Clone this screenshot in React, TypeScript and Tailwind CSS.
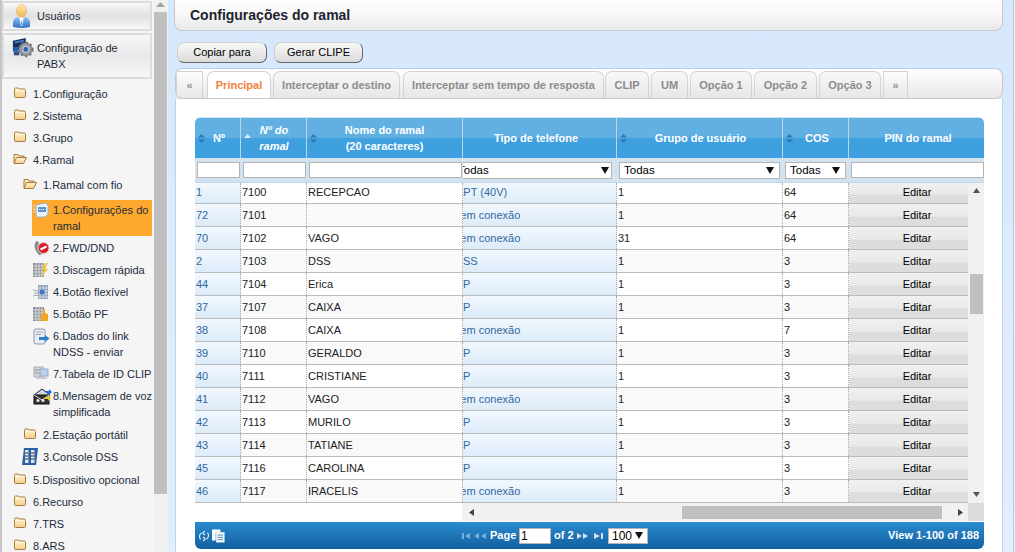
import React from "react";

const F = "font-['Liberation_Sans',Arial,sans-serif]";

function Folder({ open = false }: { open?: boolean }) {
  return (
    <svg width="14" height="13" viewBox="0 0 14 13" className="shrink-0">
      <defs>
        <linearGradient id="fg" x1="0" y1="0" x2="0" y2="1">
          <stop offset="0" stopColor="#fff3cf" />
          <stop offset="1" stopColor="#f5cf8b" />
        </linearGradient>
      </defs>
      {open ? (
        <>
          <path d="M1 11V2.5h4l1 1.5h5v2" fill="#fbe6b8" stroke="#a87a3e" />
          <path d="M1 11.5l2.5-6h10l-3 6z" fill="url(#fg)" stroke="#a87a3e" />
        </>
      ) : (
        <>
          <path d="M1.500 3.500V3q0-1 1-1h3l1 1h4.500q1.500 0 1.500 1.500v6q0 1-1 1h-9q-1 0-1-1z" fill="url(#fg)" stroke="#a87a3e" />
          <path d="M2 4.500h10" stroke="#fff8e6" />
        </>
      )}
    </svg>
  );
}

function Ico({ k }: { k: string }) {
  const c = "shrink-0";
  if (k === "cfg")
    return (
      <svg width="16" height="16" viewBox="0 0 16 16" className={c}>
        <path d="M0 4h3M0 7h3M0 10h3" stroke="#dfe3e8" />
        <path d="M3 3l9-2 3 2v9l-3 3H4l-1-2z" fill="#eef3fa" stroke="#9fb0c2" />
        <rect x="5" y="5" width="8" height="5" fill="#5b95d8" />
        <path d="M6 7.500h6" stroke="#fff" strokeDasharray="1 1" />
      </svg>
    );
  if (k === "fwd")
    return (
      <svg width="17" height="16" viewBox="0 0 17 16" className={c}>
        <path d="M3 1Q-1 8 6 15l4-1Q4 9 6 2z" fill="#8b8f96" />
        <circle cx="10.500" cy="8" r="5.500" fill="#d81e2c" stroke="#f3c9c9" />
        <path d="M7.500 9.500l6-3" stroke="#fff" strokeWidth="2" />
      </svg>
    );
  if (k === "dial" || k === "pf" || k === "flex")
    return (
      <svg width="16" height="16" viewBox="0 0 16 16" className={c}>
        {k !== "flex" && <rect x="0" y="1" width="11" height="14" fill="#8d9096" />}
        {k !== "flex" &&
          [3, 6, 9].map((x) => <path key={x} d={`M${x} 1v14`} stroke="#d5d7da" />)}
        {k !== "flex" &&
          [4, 7, 10, 13].map((y) => <path key={y} d={`M0 ${y}h11`} stroke="#d5d7da" />)}
        {k === "dial" && <path d="M13 1l-5 7h3l-3 7 7-8h-3l3-6z" fill="#f4c430" />}
        {k === "pf" && <path d="M8 15V9l2-1V3h2v4l3 1v7z" fill="#f5a623" />}
        {k === "flex" && (
          <>
            <rect x="5" y="1" width="10" height="14" fill="#8497b0" />
            {[7, 10, 13].map((x) => <path key={x} d={`M${x} 1v14`} stroke="#d5dbe3" />)}
            {[4, 7, 10, 13].map((y) => <path key={y} d={`M5 ${y}h10`} stroke="#d5dbe3" />)}
            <path d="M0 6l5 1M1 9h5M0 12l5-1" stroke="#9aa3ad" />
            <circle cx="9" cy="8" r="2.500" fill="#3f78c4" />
          </>
        )}
      </svg>
    );
  if (k === "link")
    return (
      <svg width="17" height="17" viewBox="0 0 17 17" className={c}>
        <rect x="1" y="1" width="11" height="15" rx="2" fill="#e9edf2" stroke="#8a97a6" />
        <path d="M3 4h7M3 6.500h5" stroke="#9aa6b3" />
        <path d="M6 9h6V7l4.500 3.500L12 14v-2H6z" fill="#2f7fd0" />
      </svg>
    );
  if (k === "clip")
    return (
      <svg width="16" height="14" viewBox="0 0 16 14" className={c}>
        <rect x="1" y="1" width="9" height="10" fill="#d4d6d9" stroke="#a9adb2" />
        <rect x="7" y="3" width="8" height="7" fill="#b9d2ea" stroke="#8fa9c4" />
        <rect x="3" y="11" width="11" height="2" fill="#c7cacf" />
        <path d="M2 4h4M2 7h4" stroke="#8e9398" />
      </svg>
    );
  if (k === "msg")
    return (
      <svg width="19" height="17" viewBox="0 0 19 17" className={c}>
        <path d="M1 7l8-6 8 6" fill="#cfd7df" stroke="#222" />
        <rect x="1" y="7" width="15" height="9" fill="#333" stroke="#111" />
        <path d="M1 7l8 5 7-5" fill="none" stroke="#ddd" />
        <circle cx="5" cy="12.500" r="1.500" fill="#eee" />
        <circle cx="10" cy="12.500" r="1.500" fill="#eee" />
        <path d="M13 3h3V1l3 3-3 3V5h-3z" fill="#1f6fe0" />
        <path d="M12 9h3V7l3 3-3 3v-2h-3z" fill="#f0c419" />
      </svg>
    );
  if (k === "dss")
    return (
      <svg width="18" height="18" viewBox="0 0 18 18" className={c}>
        <path d="M3 0h14l-2 17H1z" fill="#2b5fa8" />
        <rect x="4" y="2" width="3.500" height="13" fill="#dfe6ef" />
        <rect x="10" y="2" width="3.500" height="13" fill="#dfe6ef" />
        <path d="M4 5h3.500M4 8h3.500M4 11h3.500M10 5h3.500M10 8h3.500M10 11h3.500" stroke="#333" />
      </svg>
    );
  return null;
}

function User() {
  return (
    <svg width="19" height="25" viewBox="0 0 19 25" className="shrink-0">
      <defs>
        <linearGradient id="ub" x1="0" y1="0" x2="0" y2="1">
          <stop offset="0" stopColor="#8ec3f5" />
          <stop offset="1" stopColor="#2f6fc4" />
        </linearGradient>
        <linearGradient id="uh" x1="0" y1="0" x2="0" y2="1">
          <stop offset="0" stopColor="#ffe9b0" />
          <stop offset="1" stopColor="#f0b650" />
        </linearGradient>
      </defs>
      <ellipse cx="9.500" cy="7" rx="5" ry="6.500" fill="url(#uh)" stroke="#dba94c" strokeWidth=".5" />
      <path d="M1 23q-1-8 4-10l4.500 2 4.500-2q5 2 4 10-8 2-17 0z" fill="url(#ub)" />
      <path d="M7.500 13.500h4l-1 8-1 1-1-1z" fill="#fff" />
      <path d="M9.500 15.500l1 5-1 1.500-1-1.500z" fill="#5c9ade" />
    </svg>
  );
}

function Pbx() {
  return (
    <svg width="22" height="24" viewBox="0 0 24 26" className="shrink-0">
      <path d="M1 5l14-3v6l-7 7H1z" fill="#18305c" />
      <path d="M3 6l10-2v2L3 8z" fill="#4a7bc0" />
      <path d="M1 12h6v5H1z" fill="#1f5fb0" />
      <path d="M2 17h6v4H2z" fill="#31507d" />
      <circle cx="15" cy="14.500" r="7.500" fill="#8f949b" />
      <circle cx="15" cy="14.500" r="7.500" fill="none" stroke="#6d7278" strokeWidth="2" strokeDasharray="2.500 2.500" />
      <circle cx="15" cy="14.500" r="4.500" fill="#b8bcc2" />
      <circle cx="15" cy="14.500" r="2.500" fill="#2a5fb8" />
    </svg>
  );
}

function Side({
  pl,
  label,
  icon,
  mt = "",
  active = false,
  iw = "w-[20px]",
}: {
  pl: string;
  label: React.ReactNode;
  icon: React.ReactNode;
  mt?: string;
  active?: boolean;
  iw?: string;
}) {
  return (
    <div className={`flex items-start ${pl} ${mt}`}>
      <div className={`flex items-start w-full ${active ? "bg-[#ffa82e] py-[2px]" : "py-[3px]"}`}>
        <div className={`${iw} h-[16px] flex justify-start items-start shrink-0`}>{icon}</div>
        <div className="text-[11px] leading-[16px] text-[#222c3c] whitespace-pre">{label}</div>
      </div>
    </div>
  );
}

function Sidebar() {
  const top = "pl-[11px]";
  const mid = "pl-[21px]";
  const low = "pl-[30px] pr-[2px]";
  const iw = "w-[21px] pl-[1px]";
  return (
    <div className="w-[154px] h-[552px] overflow-hidden shrink-0 bg-[#f5f5f5] border-l-2 border-[#c4c4c4]">
      <div className="pt-[1px] pr-[2px]">
        <div className="h-[30px] border-2 border-[#dcdcdc] bg-gradient-to-b from-[#f7f7f7] via-[#e2e2e2] to-[#f7f7f7] flex items-center gap-[6px] pl-[8px] text-[11px] text-[#222c3c]">
          <User />
          <span>Usuários</span>
        </div>
        <div className="h-[46px] mt-[2px] border-2 border-[#dcdcdc] bg-gradient-to-b from-[#f7f7f7] via-[#e8e8e8] to-[#f7f7f7] flex items-start gap-[3px] pl-[8px] pt-[1px] text-[11px] leading-[16px] text-[#222c3c]">
          <Pbx />
          <span className="pt-[4px] whitespace-pre">{"Configuração de\nPABX"}</span>
        </div>
      </div>
      <div className="mt-[4px]">
        <Side pl={top} icon={<Folder />} label="1.Configuração" />
        <Side pl={top} icon={<Folder />} label="2.Sistema" />
        <Side pl={top} icon={<Folder />} label="3.Grupo" />
        <Side pl={top} icon={<Folder open />} label="4.Ramal" />
        <Side pl={mid} mt="mt-[3px]" icon={<Folder open />} label="1.Ramal com fio" />
        <Side pl={low} iw={iw} mt="mt-[4px]" active icon={<Ico k="cfg" />} label={"1.Configurações do\nramal"} />
        <Side pl={low} iw={iw} mt="mt-[1px]" icon={<Ico k="fwd" />} label="2.FWD/DND" />
        <Side pl={low} iw={iw} icon={<Ico k="dial" />} label="3.Discagem rápida" />
        <Side pl={low} iw={iw} icon={<Ico k="flex" />} label="4.Botão flexível" />
        <Side pl={low} iw={iw} icon={<Ico k="pf" />} label="5.Botão PF" />
        <Side pl={low} iw={iw} icon={<Ico k="link" />} label={"6.Dados do link\nNDSS - enviar"} />
        <Side pl={low} iw={iw} icon={<Ico k="clip" />} label="7.Tabela de ID CLIP" />
        <Side pl={low} iw={iw} icon={<Ico k="msg" />} label={"8.Mensagem de voz\nsimplificada"} />
        <Side pl={mid} mt="mt-[1px]" icon={<Folder />} label="2.Estação portátil" />
        <Side pl={mid} icon={<span className="-ml-[2px] -mt-[1px]"><Ico k="dss" /></span>} label="3.Console DSS" />
        <Side pl={top} mt="mt-[1px]" icon={<Folder />} label="5.Dispositivo opcional" />
        <Side pl={top} icon={<Folder />} label="6.Recurso" />
        <Side pl={top} icon={<Folder />} label="7.TRS" />
        <Side pl={top} icon={<Folder />} label="8.ARS" />
      </div>
    </div>
  );
}

function SideScroll() {
  return (
    <div className="w-[14px] h-[552px] shrink-0 bg-[#f1f1f1] flex flex-col pr-[1px]">
      <div className="h-[12px] flex justify-center pt-[2px]">
        <svg width="9" height="6" viewBox="0 0 9 6"><path d="M0 5L4.500 0 9 5z" fill="#a3a3a3" /></svg>
      </div>
      <div className="h-[482px] bg-[#bfbfbf]" />
    </div>
  );
}

const tabs: [string, string][] = [
  ["Interceptar o destino", "w-[127px] ml-[2px]"],
  ["Interceptar sem tempo de resposta", "w-[201px] ml-[3px]"],
  ["CLIP", "w-[44px] ml-[1px]"],
  ["UM", "w-[37px] ml-[2px]"],
  ["Opção 1", "w-[62px] ml-[2px]"],
  ["Opção 2", "w-[63px] ml-[2px]"],
  ["Opção 3", "w-[62px] ml-[2px]"],
];

function Tabs() {
  const base = "h-[27px] border border-b-0 border-[#d3d3d3] flex items-center justify-center text-[11px] font-bold shrink-0";
  return (
    <div className="h-[31px] rounded-[8px] border border-[#c8c8c8] border-t-[#b8cfe8] bg-gradient-to-b from-white via-[#f3f3f3] to-[#e7e7e7] flex items-end overflow-hidden">
      <div className={`${base} w-[27px] text-[#909090]`}>«</div>
      <div className={`${base} w-[64px] ml-[4px] bg-white text-[#f0813c] rounded-t-[7px] h-[28px] -mb-[1px]`}>Principal</div>
      {tabs.map(([t, w]) => (
        <div key={t} className={`${base} ${w} text-[#8c8c8c] rounded-t-[7px] bg-gradient-to-b from-[#f8f8f8] to-[#e7e7e7]`}>{t}</div>
      ))}
      <div className={`${base} w-[25px] ml-[2px] text-[#909090]`}>»</div>
    </div>
  );
}

const W = {
  n: "w-[46px]",
  r: "w-[66px]",
  nome: "w-[156px]",
  tipo: "w-[154px]",
  g: "w-[166px]",
  c: "w-[66px]",
  p: "w-[119px]",
};

const SEM = "Sem conexão";
const rows = [
  ["1", "7100", "RECEPCAO", "APT (40V)", "1", "64"],
  ["72", "7101", "", SEM, "1", "64"],
  ["70", "7102", "VAGO", SEM, "31", "64"],
  ["2", "7103", "DSS", "DSS", "1", "3"],
  ["44", "7104", "Erica", "IP", "1", "3"],
  ["37", "7107", "CAIXA", "IP", "1", "3"],
  ["38", "7108", "CAIXA", SEM, "1", "7"],
  ["39", "7110", "GERALDO", "IP", "1", "3"],
  ["40", "7111", "CRISTIANE", "IP", "1", "3"],
  ["41", "7112", "VAGO", SEM, "1", "3"],
  ["42", "7113", "MURILO", "IP", "1", "3"],
  ["43", "7114", "TATIANE", "IP", "1", "3"],
  ["45", "7116", "CAROLINA", "IP", "1", "3"],
  ["46", "7117", "IRACELIS", SEM, "1", "3"],
];

function tipoOffset(t: string) {
  if (t === "IP") return "-ml-[4px]";
  if (t === "DSS") return "-ml-[9px]";
  if (t === SEM) return "-ml-[11px]";
  return "-ml-[8px]";
}

function SortIcon({ up = false }: { up?: boolean }) {
  return (
    <svg width="7" height="9" viewBox="0 0 7 9" className="shrink-0">
      {up ? (
        <path d="M0 4L3.500 0 7 4z" fill="#dcecf8" />
      ) : (
        <>
          <path d="M0 3.500L3.500 0 7 3.500z" fill="#2f78b8" />
          <path d="M0 5.500L3.500 9 7 5.500z" fill="#2f78b8" />
        </>
      )}
    </svg>
  );
}

function Th({
  w,
  children,
  sort,
  italic,
  up,
  last,
  pr = "pr-[8px]",
}: {
  w: string;
  children: React.ReactNode;
  sort?: boolean;
  italic?: boolean;
  up?: boolean;
  last?: boolean;
  pr?: string;
}) {
  return (
    <div className={`${w} h-full flex items-center shrink-0 ${last ? "" : "border-r border-[#b9d8ef]"} pl-[3px]`}>
      {sort ? <SortIcon up={up} /> : <span className="w-[7px] shrink-0" />}
      <div className={`flex-1 text-center text-[11px] leading-[16px] font-bold text-white whitespace-pre ${pr} ${italic ? "italic" : ""}`}>
        {children}
      </div>
    </div>
  );
}

function Arrow() {
  return <svg width="8" height="7" viewBox="0 0 8 7"><path d="M0 0h8L4 7z" fill="#111" /></svg>;
}

function Select({ w }: { w: string }) {
  return (
    <div className={`${w} h-[17px] bg-white border border-[#b5b5b5] flex items-center justify-between pl-[4px] pr-[5px] pt-[1px] text-[11.500px] text-black shrink-0`}>
      <span>Todas</span>
      <Arrow />
    </div>
  );
}

function Grid() {
  const cell = "h-full flex items-center shrink-0 border-r border-dotted border-[#a8a8a8] pl-[1px] overflow-hidden whitespace-nowrap";
  return (
    <div className="flex-1 bg-white px-[19px] pt-[18px] border-x border-[#bcd4ec] overflow-hidden">
      <div className="w-[789px] rounded-[6px] overflow-hidden">
        <div className="h-[41px] flex bg-[linear-gradient(#62b0e2_0%,#62b0e2_48%,#3fa0df_52%,#3fa0df_100%)] border-t border-[#cfe0ee]">
          <Th w={W.n} sort pr="pr-[7px]">Nº</Th>
          <Th w={W.r} sort up italic pr="pr-[9px]">{"Nº do\nramal"}</Th>
          <Th w={W.nome} sort pr="pr-[10px]">{"Nome do ramal\n(20 caracteres)"}</Th>
          <Th w={W.tipo} pr="pr-[17px]">Tipo de telefone</Th>
          <Th w={W.g} sort>Grupo de usuário</Th>
          <Th w={W.c} sort pr="pr-[7px]">COS</Th>
          <Th w="w-[135px]" last pr="pr-[7px]">PIN do ramal</Th>
        </div>
        <div className="h-[25px] bg-[#d2e2ef] border-b border-[#bed8ef] flex items-center text-[12px]">
          <div className={`${W.n} pl-[2px] shrink-0`}><div className="w-[43px] h-[16px] bg-white border border-[#b5b5b5]" /></div>
          <div className={`${W.r} pl-[2px] shrink-0`}><div className="w-[63px] h-[16px] bg-white border border-[#b5b5b5]" /></div>
          <div className={`${W.nome} pl-[2px] shrink-0`}><div className="w-[153px] h-[16px] bg-white border border-[#b5b5b5]" /></div>
          <div className={`${W.tipo} shrink-0 overflow-hidden`}>
            <div className="h-[17px] bg-white border border-[#b5b5b5] -ml-[9px] w-[158px] flex items-center justify-between pl-[3px] pr-[2px] pt-[1px] text-[11.500px] text-black">
              <span>Todas</span>
              <Arrow />
            </div>
          </div>
          <div className={`${W.g} pl-[2px] shrink-0`}><Select w="w-[161px]" /></div>
          <div className={`${W.c} pl-[2px] shrink-0`}><Select w="w-[61px]" /></div>
          <div className="w-[135px] pl-[2px] shrink-0"><div className="w-[133px] h-[16px] bg-white border border-[#b5b5b5]" /></div>
        </div>
        <div className="flex h-[320px] overflow-hidden">
          <div className="w-[773px] shrink-0">
            {rows.map((r, i) => {
              const p = i === 0 ? "pb-[1px]" : "";
              return (
                <div
                  key={i}
                  className={`${i === 0 ? "h-[21px]" : "h-[23px]"} flex text-[11px] border-b border-[#bbbbbb] ${i % 2 ? "bg-[#f9f9f9]" : "bg-white"} text-[#222]`}
                >
                  <div className={`${W.n} ${cell} text-[#33699e] bg-[linear-gradient(#f2f8fe,#dcebf9)] ${p}`}>{r[0]}</div>
                  <div className={`${W.r} ${cell} ${p}`}>{r[1]}</div>
                  <div className={`${W.nome} ${cell} ${p}`}>{r[2]}</div>
                  <div className={`${W.tipo} ${cell} text-[#33699e] bg-[linear-gradient(#f2f8fe,#dcebf9)] ${p}`}>
                    <span className={tipoOffset(r[3])}>{r[3]}</span>
                  </div>
                  <div className={`${W.g} ${cell} ${p}`}>{r[4]}</div>
                  <div className={`${W.c} ${cell} ${p}`}>{r[5]}</div>
                  <div className={`${W.p} h-full flex items-center justify-center shrink-0 text-black pl-[17px] bg-[linear-gradient(#f0f0f0_0%,#e9e9e9_55%,#dddddd_60%,#dddddd_100%)] ${p}`}>Editar</div>
                </div>
              );
            })}
          </div>
          <div className="w-[16px] shrink-0 bg-[#f1f1f1] flex flex-col items-center">
            <div className="h-[15px] flex items-center"><svg width="7" height="5" viewBox="0 0 7 5"><path d="M0 5L3.500 0 7 5z" fill="#555" /></svg></div>
            <div className="h-[76px]" />
            <div className="h-[40px] w-[13px] bg-[#bfbfbf]" />
            <div className="flex-1" />
            <div className="h-[15px] flex items-center pb-[3px]"><svg width="7" height="5" viewBox="0 0 7 5"><path d="M0 0L3.500 5 7 0z" fill="#555" /></svg></div>
          </div>
        </div>
        <div className="h-[18px] flex bg-white">
          <div className="w-[267px] shrink-0" />
          <div className="w-[506px] shrink-0 bg-[#f1f1f1] flex items-center">
            <svg width="5" height="7" viewBox="0 0 5 7" className="ml-[7px]"><path d="M5 0L0 3.500 5 7z" fill="#444" /></svg>
            <div className="w-[208px]" />
            <div className="h-[13px] w-[260px] bg-[#bfbfbf]" />
            <svg width="5" height="7" viewBox="0 0 5 7" className="ml-[16px]"><path d="M0 0L5 3.500 0 7z" fill="#444" /></svg>
          </div>
          <div className="flex-1 bg-[#dcdcdc]" />
        </div>
        <div className="h-[27px] flex items-center bg-[linear-gradient(#2a8ccf,#125f9f)] mt-[1px] text-white font-bold text-[11px] pl-[3px] pr-[5px]">
          <svg width="12" height="14" viewBox="0 0 14 14" fill="none" stroke="#e6f1fa" strokeWidth="1.300" className="shrink-0">
            <path d="M3 11A5 5 0 0 1 4 3.500M11 3a5 5 0 0 1-1 7.500" />
            <path d="M8 1L5.500 3.500 8 6M6 13l2.500-2.500L6 8" />
          </svg>
          <svg width="13" height="15" viewBox="0 0 14 15" className="ml-[2px] shrink-0">
            <path d="M0 1h9v3H4v9H0z" fill="#fff" />
            <rect x="4.500" y="4" width="9" height="11" fill="#fff" />
            <path d="M6 7h6M6 9.500h6M6 12h6" stroke="#2a80c0" />
          </svg>
          <div className="w-[237px] shrink-0" />
          <svg width="25" height="8" viewBox="0 0 25 8" className="shrink-0">
            <path d="M0 1h2v6H0zM8 1L3 4l5 3z" fill="#7bb0d8" />
            <path d="M17 1l-5 3 5 3zM24 1l-5 3 5 3z" fill="#7bb0d8" />
          </svg>
          <span className="ml-[3px] w-[26px] shrink-0">Page</span>
          <div className="w-[32px] h-[16px] bg-white border border-[#b5b5b5] text-black font-normal text-[12px] leading-[14px] pl-[1px] ml-[3px] shrink-0">1</div>
          <span className="ml-[3px] w-[20px] shrink-0">of 2</span>
          <svg width="28" height="8" viewBox="0 0 28 8" className="ml-[3px] shrink-0">
            <path d="M0 1l5 3-5 3zM6 1l5 3-5 3z" fill="#cfe3f2" />
            <path d="M17 1l6 3-6 3zM24 1h2v6h-2z" fill="#cfe3f2" />
          </svg>
          <div className="w-[40px] h-[16px] bg-white border border-[#b5b5b5] flex items-center justify-between pl-[3px] pr-[4px] text-black font-normal text-[12px] ml-[3px] shrink-0">
            <span>100</span>
            <Arrow />
          </div>
          <div className="flex-1 text-right">View 1-100 of 188</div>
        </div>
      </div>
    </div>
  );
}

const btn =
  "h-[21px] rounded-[7px] border border-[#d0d0d0] border-r-[#666] border-b-[#666] bg-gradient-to-b from-[#f8f8f8] to-[#dcdcdc] flex items-center justify-center text-[11px] text-black";

export default function App() {
  return (
    <div className={`${F} w-[1015px] h-[552px] overflow-hidden flex bg-[linear-gradient(#d6e8fd,#d9e9fc_25%,#e2eefc)]`}>
      <Sidebar />
      <SideScroll />
      <div className="w-[845px] shrink-0 h-full flex flex-col pl-[6px] pr-[10px]">
        <div className="h-[32px] shrink-0 border border-t-0 border-[#c8c8c8] rounded-b-[8px] bg-gradient-to-b from-white via-[#f7f7f7] to-[#e9e9e9] flex items-center pl-[15px] text-[14px] font-bold text-[#1d2430] -mt-[1px] pt-[2px]">
          Configurações do ramal
        </div>
        <div className="flex gap-[7px] mt-[11px] ml-[3px]">
          <div className={`${btn} w-[90px]`}>Copiar para</div>
          <div className={`${btn} w-[89px]`}>Gerar CLIPE</div>
        </div>
        <div className="mt-[5px] ml-[1px] flex-1 flex flex-col min-h-0">
          <Tabs />
          <Grid />
        </div>
      </div>
      <div className="flex-1 border-l border-[#b8c8d8] bg-[#e2effd]" />
    </div>
  );
}
